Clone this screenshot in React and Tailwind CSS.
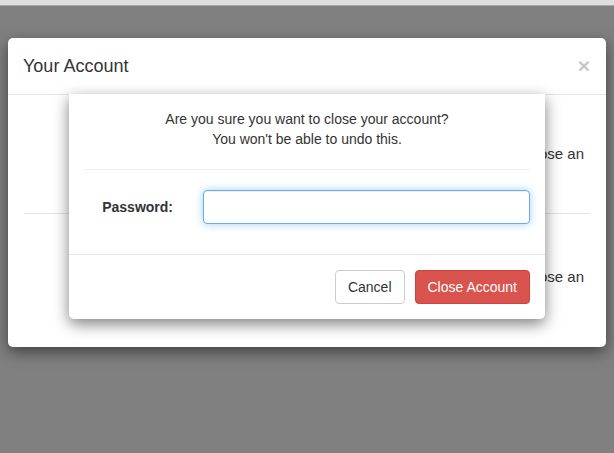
import React from "react";

const font = { fontFamily: '"Liberation Sans", Arial, sans-serif' };

const ConfirmClose = () => {
  return (
    <div className="absolute left-[69px] top-[94px] w-[476px] bg-white rounded-b-[5px] shadow-[0_5px_15px_rgba(0,0,0,0.5)] text-[14px] leading-[20px] text-[#333]">
      <div className="px-[15px] pt-[15px] pb-[15px]">
        <p className="text-center">
          Are you sure you want to close your account?
          <br />
          You won't be able to undo this.
        </p>
        <hr className="mt-[20px] mb-[20px] border-0 border-t border-[#eee]" />
        <div className="flex items-center -mx-[15px] mb-[15px]">
          <label className="w-[119px] shrink-0 pr-[15px] text-right font-bold">Password:</label>
          <div className="flex-1 px-[15px]">
            <input
              type="password"
              className="block w-full h-[34px] px-[12px] rounded-[4px] border border-[#66afe9] bg-white outline-none shadow-[inset_0_1px_1px_rgba(0,0,0,0.075),0_0_8px_rgba(102,175,233,0.6)]"
            />
          </div>
        </div>
      </div>
      <div className="flex justify-end gap-[10px] p-[15px] border-t border-[#e5e5e5]">
        <button className="h-[34px] px-[12px] rounded-[4px] border border-[#ccc] bg-white text-[#333]">Cancel</button>
        <button className="h-[34px] px-[12px] rounded-[4px] border border-[#d43f3a] bg-[#d9534f] text-white">Close Account</button>
      </div>
    </div>
  );
};

const App = () => {
  return (
    <div className="relative w-[614px] h-[453px] bg-[#808080] overflow-hidden" style={font}>
      <div className="h-[6px] bg-[#dedede] border-b border-[#a8a8a8]" />
      <div className="mt-[32px] mx-[8px] bg-white rounded-[5px] shadow-[0_5px_15px_rgba(0,0,0,0.5)] text-[#333]">
        <div className="flex items-start justify-between px-[15px] py-[15px] border-b border-[#e5e5e5]">
          <h4 className="text-[18px] leading-[26px]">Your Account</h4>
          <span className="text-[21px] leading-[21px] font-bold text-[#c8c8c8] mt-[2px] mr-[1px]">×</span>
        </div>
        <div className="px-[16px]">
          <div className="h-[119px] flex items-center justify-end pr-[6px] border-b border-[#e5e5e5] text-[15px]">
            close an
          </div>
          <div className="h-[133px] flex items-start justify-end pt-[53px] pr-[6px] text-[15px] leading-[20px]">
            close an
          </div>
        </div>
      </div>
      <ConfirmClose />
    </div>
  );
};

export default App;
